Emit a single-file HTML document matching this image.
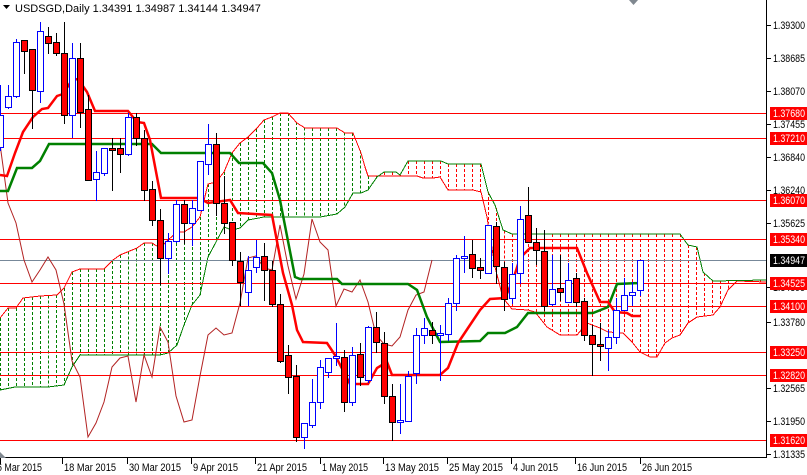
<!DOCTYPE html>
<html><head><meta charset="utf-8"><style>
html,body{margin:0;padding:0;background:#fff;}
svg{display:block;font-family:"Liberation Sans",sans-serif;font-size:11px;}
</style></head><body>
<svg id="c" width="807" height="475" xmlns="http://www.w3.org/2000/svg" shape-rendering="crispEdges"></svg>
<script>
var s=document.getElementById('c'),h='';
function P(pts,c,w,extra){h+='<polyline fill="none" stroke="'+c+'" stroke-width="'+w+'" '+(extra||'')+' points="'+pts.map(function(p){return p.join(',')}).join(' ')+'"/>';}
function L(x1,y1,x2,y2,c,extra){h+='<line x1="'+x1+'" y1="'+y1+'" x2="'+x2+'" y2="'+y2+'" stroke="'+c+'" '+(extra||'')+'/>';}
function interp(pl,x){for(var i=0;i<pl.length-1;i++){if(x>=pl[i][0]&&x<=pl[i+1][0]){var t=(x-pl[i][0])/((pl[i+1][0]-pl[i][0])||1);return pl[i][1]+t*(pl[i+1][1]-pl[i][1]);}}return null;}
var A=[[0,318],[8,308],[16,308],[23,298],[40,296],[57,295],[64,288],[72,272],[80,269],[104,269],[113,260],[120,255],[137,248],[144,243],[152,243],[160,248],[168,240],[177,232],[184,232],[192,227],[200,217],[208,184],[216,182],[224,172],[232,153],[240,143],[248,137],[257,128],[264,120],[272,117],[280,113],[288,113],[297,123],[305,128],[337,128],[345,133],[353,133],[357,143],[361,153],[365,167],[368,176],[417,176],[423,178],[433,178],[440,177],[448,190],[473,190],[481,192],[487,217],[495,267],[503,298],[512,309],[528,310],[535,312],[547,327],[560,335],[577,335],[587,323],[600,328],[608,332],[623,333],[632,342],[640,352],[650,357],[657,357],[665,343],[672,338],[680,335],[688,323],[697,317],[713,315],[720,307],[728,290],[737,281],[766,282]];
var B=[[0,390],[15,387],[48,387],[64,385],[72,367],[80,355],[160,355],[168,353],[177,345],[184,325],[192,305],[200,295],[208,257],[216,242],[224,227],[232,230],[240,228],[248,220],[264,217],[320,217],[337,214],[345,207],[353,193],[361,193],[368,190],[377,177],[384,172],[396,172],[400,175],[408,161],[441,161],[448,164],[481,164],[488,192],[495,205],[503,230],[512,234],[680,234],[688,245],[697,247],[703,272],[713,281],[766,280]];
for(var x=0;x<=760;x+=8){var a=interp(A,x),b=interp(B,x);if(a==null||b==null)continue;var col=a<b?'#008000':'#ff0000';L(x+.5,Math.min(a,b),x+.5,Math.max(a,b),col,'stroke-dasharray="3,2"');}
P(A,'#ff0000',1);P(B,'#008000',1);
[113,138,200,239,283,306,352,375,440].forEach(function(y){L(0,y+.5,766,y+.5,'#ff0000','stroke-width="1.3"');});
L(0,260.5,766,260.5,'#778899');
var D=[['u',115,147,85,150],['u',96,107,85,108],['u',42,96,39,97],['d',40,51,40,73],['d',49,90,49,128],['u',31,91,22,102],['d',36,43,27,53],['d',42,53,33,55],['d',53,115,22,123],['u',58,115,43,137],['d',58,112,43,127],['d',109,180,95,180],['u',172,179,151,200],['u',148,173,148,175],['d',148,150,138,190],['d',148,154,138,172],['u',117,154,113,155],['d',117,138,113,145],['d',138,190,130,200],['d',189,220,181,225],['d',220,258,209,284],['u',241,258,233,273],['u',204,241,200,242],['d',204,223,200,243],['u',208,223,200,245],['u',161,210,161,210],['u',144,164,124,174],['d',144,203,133,215],['d',203,223,176,233],['d',222,260,222,265],['d',261,282,252,305],['u',270,292,256,305],['u',257,267,240,272],['d',256,270,243,300],['d',270,304,261,306],['d',304,361,294,362],['d',355,377,345,393],['d',376,437,365,441],['u',423,437,423,448],['u',402,425,379,427],['u',367,402,360,408],['u',358,372,358,377],['u',356,358,323,365],['d',357,402,350,411],['u',355,402,347,405],['d',354,377,343,385],['u',327,380,326,382],['d',327,342,312,352],['d',343,396,332,403],['d',396,422,384,440],['u',420,422,384,433],['u',376,421,371,421],['u',335,373,328,383],['u',328,335,318,343],['d',330,335,322,343],['u',333,335,325,380],['u',303,334,298,340],['u',258,303,255,310],['u',256,258,236,272],['d',254,268,240,277],['d',267,270,258,278],['u',225,273,225,273],['d',226,266,222,283],['d',267,299,262,310],['u',274,298,263,303],['u',219,273,206,283],['d',215,242,187,242],['d',242,250,228,264],['d',251,306,230,310],['u',289,304,255,305],['d',288,292,255,300],['u',280,302,263,302],['d',278,302,273,306],['d',301,335,298,340],['d',335,344,325,375],['d',344,346,323,360],['u',337,348,330,370],['u',310,337,298,343],['u',295,310,278,310],['u',292,295,282,305],['u',260,290,260,295]];
var ch=[];for(var i=26;i<D.length;i++){var d=D[i];ch.push([(i-26)*8,d[0]=='u'?d[1]:d[2]]);}
P(ch,'#b22222',1,'shape-rendering="auto"');
P([[0,191],[8,191],[17,168],[32,168],[40,161],[49,144],[152,144],[161,153],[230,153],[239,163],[263,163],[272,173],[280,200],[295,277],[300,279],[337,279],[342,284],[408,284],[417,290],[427,317],[440,342],[480,341],[488,333],[505,333],[517,327],[528,313],[593,313],[608,307],[617,284],[640,283]],'#008000',2.5,'shape-rendering="auto"');
P([[0,175],[7,176],[15,153],[23,132],[33,117],[42,109],[48,108],[57,96],[63,94],[72,80],[78,79],[87,92],[95,111],[128,111],[137,122],[144,123],[150,140],[161,198],[199,198],[208,203],[230,200],[238,213],[272,215],[283,273],[292,305],[297,330],[303,342],[327,343],[335,355],[350,384],[368,384],[377,368],[387,362],[392,375],[440,375],[448,368],[458,343],[468,328],[480,310],[490,299],[505,298],[513,280],[520,258],[530,248],[577,248],[587,273],[600,302],[608,302],[615,312],[627,313],[632,316],[641,316]],'#ff0000',2.5,'shape-rendering="auto"');
D.forEach(function(d,i){var x=i*8;var up=d[0]=='u';var wc=up?'#0000ff':'#000';L(x+.5,d[3],x+.5,d[4]+1,wc);var bh=Math.max(d[2]-d[1],1);
 if(up)h+='<rect x="'+(x-2.5)+'" y="'+(d[1]+.5)+'" width="6" height="'+bh+'" fill="#fff" stroke="#0000ff"/>';
 else h+='<rect x="'+(x-2.5)+'" y="'+(d[1]+.5)+'" width="6" height="'+bh+'" fill="#ff0000" stroke="#000"/>';});
h+='<rect x="767" y="0" width="40" height="475" fill="#fff"/><rect x="0" y="458" width="807" height="17" fill="#fff"/>';
L(766.5,0,766.5,458,'#000');L(0,457.5,767,457.5,'#000');
var TL='textLength="32" lengthAdjust="spacingAndGlyphs"';
[[25,'1.39300'],[58,'1.38685'],[91,'1.38070'],[124,'1.37455'],[157,'1.36840'],[190,'1.36240'],[223,'1.35625'],[322,'1.33780'],[388,'1.32565'],[421,'1.31950'],[454,'1.31335'],[287,'1.34395']].forEach(function(t){L(767,t[0]+.5,771,t[0]+.5,'#000');h+='<text x="773" y="'+(t[0]+4)+'" fill="#000" '+TL+'>'+t[1]+'</text>';});
[[113,'1.37680'],[138,'1.37210'],[200,'1.36070'],[239,'1.35340'],[283,'1.34525'],[306,'1.34100'],[352,'1.33250'],[375,'1.32820'],[440,'1.31620']].forEach(function(t){h+='<rect x="770" y="'+(t[0]-6)+'" width="37" height="13" fill="#ff0000"/><text x="773" y="'+(t[0]+4)+'" fill="#fff" '+TL+'>'+t[1]+'</text>';});
h+='<rect x="770" y="254" width="37" height="13" fill="#000"/><text x="773" y="264" fill="#fff" '+TL+'>1.34947</text>';
[[0,'6 Mar 2015',45],[62,'18 Mar 2015',52],[127,'30 Mar 2015',52],[191,'9 Apr 2015',45],[255,'21 Apr 2015',50],[320,'1 May 2015',46],[383,'13 May 2015',54],[447,'25 May 2015',54],[511,'4 Jun 2015',45],[575,'16 Jun 2015',50],[640,'26 Jun 2015',50]].forEach(function(t){L(t[0]+.5,458,t[0]+.5,464,'#000');h+='<text x="'+(t[0]?t[0]+2:-3)+'" y="471" fill="#000" textLength="'+t[2]+'" lengthAdjust="spacingAndGlyphs">'+t[1]+'</text>';});
h+='<polygon points="629,0 638,0 633.5,5" fill="#808890" shape-rendering="auto"/>';
h+='<polygon points="0,452 6,458 0,458" fill="#808890" shape-rendering="auto"/>';
h+='<polygon points="3,5 10,5 6.5,9" fill="#000" shape-rendering="auto"/><text x="15" y="12" fill="#000">USDSGD,Daily  1.34391 1.34987 1.34144 1.34947</text>';
s.innerHTML=h;
</script>
</body></html>
